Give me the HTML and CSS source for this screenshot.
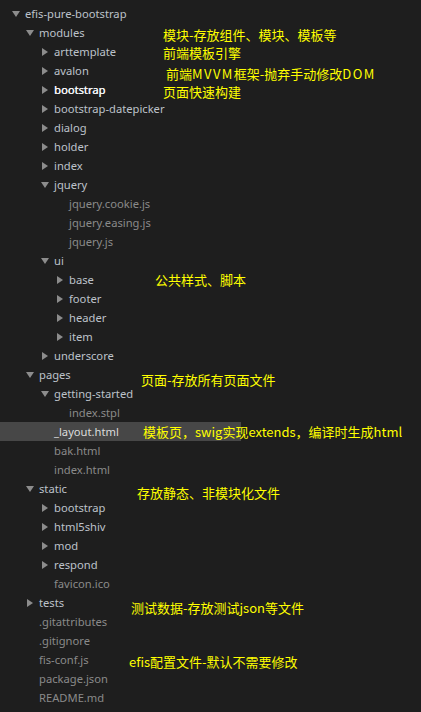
FILE: index.html
```html
<!DOCTYPE html>
<html>
<head>
<meta charset="utf-8">
<link rel="stylesheet" href="styles.css">
</head>
<body>
<div class="panel">
  <ul class="tree">
    <li class="row l0 dir open">efis-pure-bootstrap</li>
    <li class="row l1 dir open">modules</li>
    <li class="row l2 dir">arttemplate</li>
    <li class="row l2 dir">avalon</li>
    <li class="row l2 dir strong">bootstrap</li>
    <li class="row l2 dir">bootstrap-datepicker</li>
    <li class="row l2 dir">dialog</li>
    <li class="row l2 dir">holder</li>
    <li class="row l2 dir">index</li>
    <li class="row l2 dir open">jquery</li>
    <li class="row l3 file">jquery.cookie.js</li>
    <li class="row l3 file">jquery.easing.js</li>
    <li class="row l3 file">jquery.js</li>
    <li class="row l2 dir open">ui</li>
    <li class="row l3 dir">base</li>
    <li class="row l3 dir">footer</li>
    <li class="row l3 dir">header</li>
    <li class="row l3 dir">item</li>
    <li class="row l2 dir">underscore</li>
    <li class="row l1 dir open">pages</li>
    <li class="row l2 dir open">getting-started</li>
    <li class="row l3 file">index.stpl</li>
    <li class="row l2 file selected">_layout.html</li>
    <li class="row l2 file">bak.html</li>
    <li class="row l2 file">index.html</li>
    <li class="row l1 dir open">static</li>
    <li class="row l2 dir">bootstrap</li>
    <li class="row l2 dir">html5shiv</li>
    <li class="row l2 dir">mod</li>
    <li class="row l2 dir">respond</li>
    <li class="row l2 file">favicon.ico</li>
    <li class="row l1 dir">tests</li>
    <li class="row l1 file">.gitattributes</li>
    <li class="row l1 file">.gitignore</li>
    <li class="row l1 file">fis-conf.js</li>
    <li class="row l1 file">package.json</li>
    <li class="row l1 file">README.md</li>
  </ul>
  <div class="note n1">模块-存放组件、模块、模板等</div>
  <div class="note n2">前端模板引擎</div>
  <div class="note n3">前端<span class="lat">MVVM</span>框架-抛弃手动修改<span class="lat">DOM</span></div>
  <div class="note n4">页面快速构建</div>
  <div class="note n5">公共样式、脚本</div>
  <div class="note n6">页面-存放所有页面文件</div>
  <div class="note n7">模板页，swig实现extends，编译时生成html</div>
  <div class="note n8">存放静态、非模块化文件</div>
  <div class="note n9">测试数据-存放测试json等文件</div>
  <div class="note n10">efis配置文件-默认不需要修改</div>
</div>
</body>
</html>
```
FILE: styles.css
```css
html, body {
  margin: 0;
  padding: 0;
  background: #1e1e1e;
}
.panel {
  position: relative;
  width: 421px;
  height: 712px;
  overflow: hidden;
  background: #1e1e1e;
  font-family: "Noto Sans", "Open Sans", sans-serif;
}
.tree {
  list-style: none;
  margin: 0;
  padding: 4px 0 0 0;
}
.row {
  position: relative;
  height: 19px;
  line-height: 19px;
  font-size: 11.2px;
  white-space: nowrap;
  color: #bdc2ca;
}
.l0 { padding-left: 25px; }
.l1 { padding-left: 39px; }
.l2 { padding-left: 54px; }
.l3 { padding-left: 69px; }
.file { color: #8a8a8a; }
.strong { color: #f4f6f8; text-shadow: 0.3px 0 0 #f4f6f8; }
.selected {
  width: 241px;
  box-sizing: border-box;
  background: #474747;
  color: #dcdcdc;
}
.dir::before {
  content: "";
  position: absolute;
  width: 0;
  height: 0;
}
.dir:not(.open)::before {
  top: 6px;
  margin-left: -12px;
  border-top: 4px solid transparent;
  border-bottom: 4px solid transparent;
  border-left: 6px solid #8c8c8c;
}
.dir.open::before {
  top: 7px;
  margin-left: -13px;
  border-left: 4px solid transparent;
  border-right: 4px solid transparent;
  border-top: 6px solid #8c8c8c;
}
.note {
  position: absolute;
  color: #ffff00;
  font-family: "Noto Sans CJK SC", "Noto Sans", sans-serif;
  font-size: 13px;
  line-height: 18px;
  white-space: nowrap;
}
.lat { letter-spacing: 1.4px; }
.n1 { left: 163px; top: 26px; }
.n2 { left: 163px; top: 44px; }
.n3 { left: 166px; top: 65px; }
.n4 { left: 163px; top: 83px; }
.n5 { left: 155px; top: 271px; }
.n6 { left: 141px; top: 371px; }
.n7 { left: 143px; top: 423px; }
.n8 { left: 137px; top: 484px; }
.n9 { left: 131px; top: 599px; }
.n10 { left: 129px; top: 653px; }
```
